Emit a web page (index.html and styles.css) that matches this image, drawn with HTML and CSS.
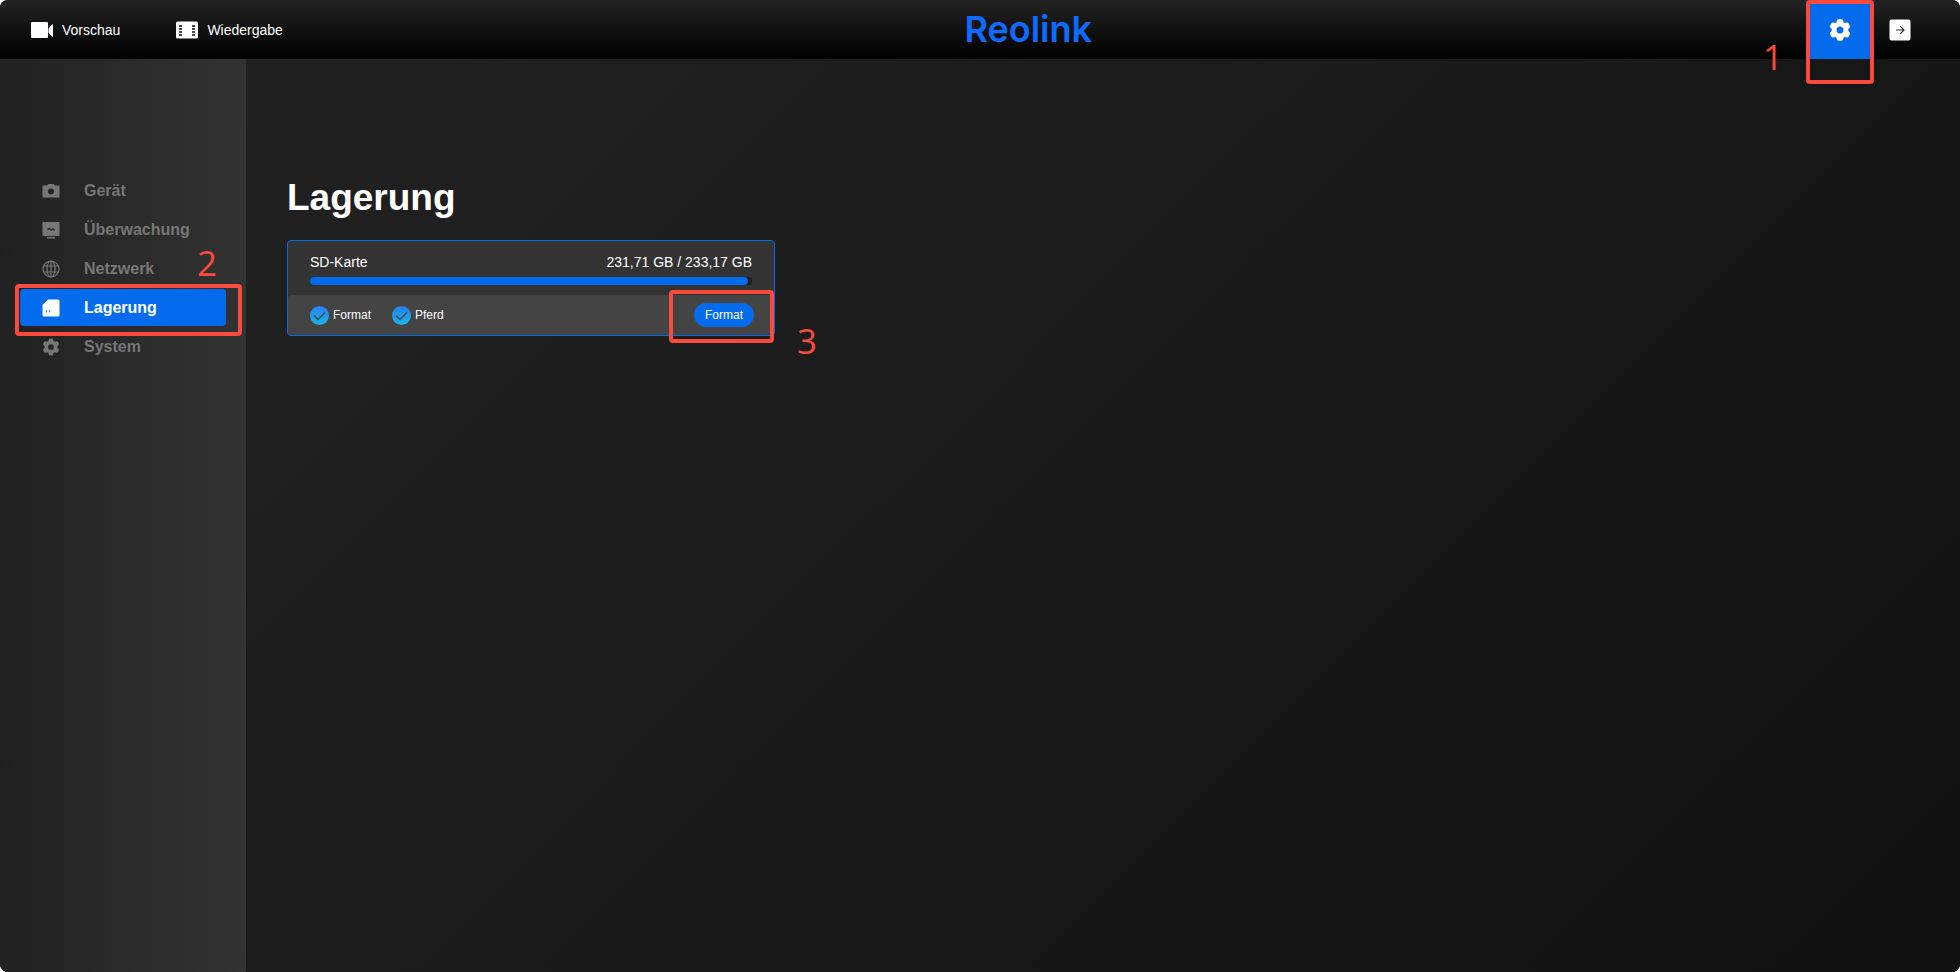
FILE: index.html
```html
<!DOCTYPE html>
<html lang="de">
<head>
    <meta charset="UTF-8">
    <meta name="viewport" content="width=device-width, initial-scale=1.0">
    <title>Reolink</title>
    <link rel="stylesheet" href="styles.css">
</head>
<body>
    <div class="app">
        <header class="topbar">
            <nav class="topnav">
                <a href="#preview">
                    <svg width="22" height="18" viewBox="0 0 22 18" fill="#fff"><rect y="1" width="17" height="16" rx="1"/><path d="M17.500 7.500 21 3.500q1-.5 1 .5v11q0 1-1 .5l-3.500-4z"/></svg>
                    Vorschau
                </a>
                <a href="#playback">
                    <svg width="22" height="18" viewBox="0 0 22 18"><rect y=".5" width="22" height="17" rx="1.5" fill="#fff"/><path d="M3 5h3M3 8h3M3 11h3M3 14h3M16 5h3M16 8h3M16 11h3M16 14h3" stroke="#111" stroke-width="1.500"/></svg>
                    Wiedergabe
                </a>
            </nav>
            <div class="logo">Reolink</div>
            <div class="tools">
                <button type="button" class="tool-settings" aria-label="Einstellungen">
                    <svg width="24" height="24" viewBox="0 0 24 24"><path fill="#fff" stroke="#fff" stroke-width="3" stroke-linejoin="round" d="M10.500 2.700h3l.8 2.700 2.200 1.200 2.700-.7 1.500 2.600-1.900 2v3l1.900 2-1.500 2.600-2.700-.7-2.200 1.200-.8 2.700h-3l-.8-2.700-2.200-1.200-2.700.7-1.500-2.600 1.900-2v-3l-1.900-2 1.500-2.600 2.700.7 2.200-1.200z"/><circle cx="12" cy="12" r="3.500" fill="#046bed"/></svg>
                    <span class="mark mark-1"><span class="mark-number">1</span></span>
                </button>
                <button type="button" class="tool-logout" aria-label="Abmelden">
                    <svg width="22" height="22" viewBox="0 0 22 22"><rect x=".5" y=".5" width="21" height="21" rx="2" fill="#fff"/><path d="M7 11h8M11.200 7.200 15 11l-3.800 3.800" fill="none" stroke="#333" stroke-width="1.200"/></svg>
                </button>
            </div>
        </header>

        <div class="body">
            <aside class="sidebar">
                <a href="#device">
                    <svg width="18" height="18" viewBox="0 0 18 18" fill="currentColor"><path fill-rule="evenodd" d="M.5 3.500h4.500L6.500 2h5L13 3.500h4.500v12H.5zM9 6.500a3 3 0 1 0 0 6 3 3 0 0 0 0-6z"/></svg>
                    Gerät
                </a>
                <a href="#surveillance">
                    <svg width="18" height="18" viewBox="0 0 18 18"><path fill="currentColor" d="M.5 1h17v14H.5zM5 16h8v1.500H5z"/><path d="M5.500 8.500 7.500 7.500 9 9l1.500-1 2 1" fill="none" stroke="#262626" stroke-width="1.400"/></svg>
                    Überwachung
                </a>
                <a href="#network">
                    <svg width="18" height="18" viewBox="0 0 18 18" fill="none" stroke="currentColor" stroke-width="1.200"><circle cx="9" cy="9" r="8"/><ellipse cx="9" cy="9" rx="4" ry="8"/><path d="M9 1v16M1.500 6h15M1.500 12h15"/></svg>
                    Netzwerk
                </a>
                <a href="#storage" class="active">
                    <svg width="18" height="18" viewBox="0 0 18 18"><path fill="#fff" d="M6 .5h10q1.500 0 1.500 1.500v14q0 1.500-1.500 1.500H2Q.5 17.500.5 16V6z"/><path d="M4.500 11v2.500M7.500 11v2.500" stroke="#3b8df5" stroke-width="1.200"/></svg>
                    Lagerung
                    <span class="mark mark-2"><span class="mark-number">2</span></span>
                </a>
                <a href="#system">
                    <svg width="18" height="18" viewBox="1 1 22 22"><path fill="currentColor" stroke="currentColor" stroke-width="2" stroke-linejoin="round" d="M10.500 2.700h3l.8 2.700 2.200 1.200 2.700-.7 1.500 2.600-1.900 2v3l1.900 2-1.500 2.600-2.700-.7-2.200 1.200-.8 2.700h-3l-.8-2.700-2.200-1.200-2.700.7-1.500-2.600 1.900-2v-3l-1.900-2 1.500-2.600 2.700.7 2.200-1.200z"/><circle cx="12" cy="12" r="3.500" fill="#252525"/></svg>
                    System
                </a>
            </aside>

            <main class="content">
                <h1>Lagerung</h1>
                <section class="card">
                    <div class="card-info">
                        <div class="card-row">
                            <span>SD-Karte</span>
                            <span>231,71 GB / 233,17 GB</span>
                        </div>
                        <div class="usage"><div class="usage-fill" style="width: 99%"></div></div>
                    </div>
                    <div class="card-actions">
                        <span class="state">
                            <svg width="19" height="19" viewBox="0 0 19 19"><defs><linearGradient id="tick" x2="0" y2="1"><stop stop-color="#2a7df2"/><stop offset="1" stop-color="#16b9ea"/></linearGradient></defs><circle cx="9.500" cy="9.500" r="9.500" fill="url(#tick)"/><path d="m4 9.500 4 4 7-7" fill="none" stroke="#444" stroke-width="1.400"/></svg>
                            Format
                        </span>
                        <span class="state">
                            <svg width="19" height="19" viewBox="0 0 19 19"><circle cx="9.500" cy="9.500" r="9.500" fill="url(#tick)"/><path d="m4 9.500 4 4 7-7" fill="none" stroke="#444" stroke-width="1.400"/></svg>
                            Pferd
                        </span>
                        <button type="button" class="format-btn">Format<span class="mark mark-3"><span class="mark-number">3</span></span></button>
                    </div>
                </section>
            </main>
        </div>
    </div>
</body>
</html>
```

FILE: styles.css
```css
* {
    margin: 0;
    padding: 0;
    box-sizing: border-box;
}

body {
    background: #fff;
    color: #fff;
    font-family: "Liberation Sans", Arial, sans-serif;
    font-size: 14px;
}

a {
    color: inherit;
    text-decoration: none;
}

button {
    border: none;
    background: none;
    color: #fff;
    font-family: inherit;
    cursor: pointer;
}

svg {
    display: block;
    flex: none;
}

.app {
    display: flex;
    flex-direction: column;
    min-height: 100vh;
    border-radius: 8px;
    overflow: hidden;
    background: #111;
}

/* top bar */
.topbar {
    position: relative;
    z-index: 1;
    display: grid;
    grid-template-columns: 10fr auto 9fr;
    height: 59px;
    background: linear-gradient(#232323, #000);
}

.topnav {
    display: flex;
    align-items: center;
    gap: 56px;
    padding-left: 31px;
}

.topnav a {
    display: flex;
    align-items: center;
    gap: 9px;
}

.logo {
    color: #0d6bff;
    font-family: Inter, sans-serif;
    font-size: 36px;
    font-weight: 600;
    line-height: 59px;
}

.tools {
    display: flex;
    justify-content: flex-end;
    gap: 19px;
    padding-right: 49px;
}

.tool-settings {
    position: relative;
    display: flex;
    align-items: center;
    justify-content: center;
    width: 60px;
    background: #046bed;
}

/* body */
.body {
    display: flex;
    flex: 1;
}

.sidebar {
    display: flex;
    flex-direction: column;
    gap: 2px;
    width: 246px;
    padding: 113px 20px 20px;
    background: linear-gradient(90deg, #212121, #333);
}

.sidebar a {
    position: relative;
    display: flex;
    align-items: center;
    gap: 24px;
    height: 37px;
    padding-left: 22px;
    border-radius: 4px;
    color: #777;
    font-size: 16px;
    font-weight: bold;
}

.sidebar .active {
    background: #046bed;
    color: #fff;
}

.content {
    flex: 1;
    padding: 118px 41px 41px;
    background: linear-gradient(135deg, #212121, #111);
}

h1 {
    margin-bottom: 21px;
    font-size: 37px;
    line-height: 42px;
}

.card {
    max-width: 488px;
    border: 1px solid #046bed;
    border-radius: 4px;
    background: #333;
}

.card-info {
    padding: 12px 22px 10px;
}

.card-row {
    display: flex;
    justify-content: space-between;
    margin-bottom: 6px;
    line-height: 18px;
}

.usage {
    height: 8px;
    border-radius: 4px;
    background: #1c1c1c;
}

.usage-fill {
    height: 100%;
    border-radius: 4px;
    background: #046bed;
}

.card-actions {
    display: flex;
    align-items: center;
    gap: 21px;
    height: 40px;
    padding: 0 20px 0 22px;
    border-radius: 4px;
    background: #444;
    font-size: 12px;
}

.state {
    display: flex;
    align-items: center;
    gap: 4px;
}

.format-btn {
    position: relative;
    width: 60px;
    height: 24px;
    margin-left: auto;
    border-radius: 12px;
    background: #046bed;
    font-size: 12px;
}

/* numbered step marks over the controls */
.mark {
    position: absolute;
    border: 4px solid #f84b3e;
    border-radius: 4px;
    pointer-events: none;
}

.mark-number {
    position: absolute;
    color: #f84b3e;
    font-family: "Open Sans", sans-serif;
    font-size: 35px;
    font-weight: normal;
    line-height: 36px;
}

.mark-1 {
    inset: 0 -4px -25px;
}

.mark-1 .mark-number {
    top: 35px;
    right: 87px;
}

.mark-2 {
    inset: -5px -16px -10px -5px;
}

.mark-2 .mark-number {
    right: 21px;
    bottom: 51px;
}

.mark-3 {
    inset: -13px -20px -16px -25px;
}

.mark-3 .mark-number {
    top: 29px;
    left: 124px;
}
```
